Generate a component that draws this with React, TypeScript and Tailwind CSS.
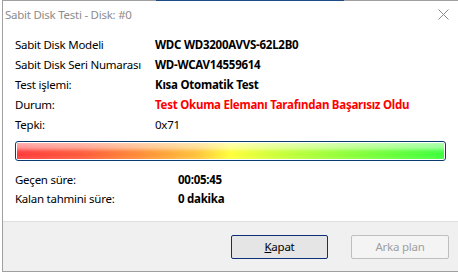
import React from "react";

const font = { fontFamily: '"Noto Sans", "Open Sans", sans-serif' };

function Row({ label, value, valueClass, labelW }: { label: string; value: string; valueClass: string; labelW: string }) {
  return (
    <div className="flex h-[20px] items-center">
      <div className={`${labelW} shrink-0 text-black`}>{label}</div>
      <div className={valueClass}>{value}</div>
    </div>
  );
}

export default function App() {
  return (
    <div className="relative h-[273px] w-[458px] overflow-hidden bg-white text-[11.5px] leading-none tracking-[-0.25px]" style={font}>
      <div className="ml-[2px] flex h-[272px] flex-col border-b border-l border-[#a0a0a0] bg-white">
        {/* top border */}
        <div className="flex h-[1px] shrink-0">
          <div className="w-[153px] bg-[#a0a0a0]" />
          <div className="w-[188px] bg-[#1c4a86]" />
          <div className="flex-1 bg-[#a0a0a0]" />
        </div>
        {/* title bar */}
        <div className="flex h-[28px] shrink-0 items-center justify-between pl-[2px] pr-[9px]">
          <span className="text-[#8c8c8c]">Sabit Disk Testi - Disk: #0</span>
          <svg width="11" height="11" viewBox="0 0 11 11" className="mb-[1px]">
            <path d="M0.5 0.5 L10.5 10.5 M10.5 0.5 L0.5 10.5" stroke="#8a8a8a" strokeWidth="1" />
          </svg>
        </div>
        <div className="flex flex-1 flex-col pl-[12px] pt-[6px]">
          <Row label="Sabit Disk Modeli" value="WDC WD3200AVVS-62L2B0" valueClass="font-bold text-black" labelW="w-[140px]" />
          <Row label="Sabit Disk Seri Numarası" value="WD-WCAV14559614" valueClass="font-bold text-black" labelW="w-[140px]" />
          <Row label="Test işlemi:" value="Kısa Otomatik Test" valueClass="font-bold text-black" labelW="w-[140px]" />
          <Row label="Durum:" value="Test Okuma Elemanı Tarafından Başarısız Oldu" valueClass="font-bold text-[#ff0000]" labelW="w-[140px]" />
          <Row label="Tepki:" value="0x71" valueClass="text-black" labelW="w-[140px]" />
          <div className="mt-[6px] h-[20px] w-[431px] rounded-[3px] border border-[#0a3a6e] p-[1px]">
            <div
              className="relative h-full w-full"
              style={{
                background:
                  "linear-gradient(to right, #ff3b3b 0%, #ff5a3a 15%, #ff8a36 28%, #ffc23a 42%, #ffff3a 50%, #c8ff3a 62%, #8cff3a 78%, #3cff3c 100%)",
              }}
            >
              <div
                className="absolute inset-0"
                style={{
                  background:
                    "linear-gradient(to bottom, rgba(255,255,255,0.6) 0%, rgba(255,255,255,0.45) 30%, rgba(255,255,255,0.05) 55%, rgba(255,255,255,0) 75%, rgba(255,255,255,0.1) 100%)",
                }}
              />
            </div>
          </div>
          <div className="mt-[9px]">
            <Row label="Geçen süre:" value="00:05:45" valueClass="font-bold text-black" labelW="w-[163px]" />
            <div className="-mt-[1px]">
              <Row label="Kalan tahmini süre:" value="0 dakika" valueClass="font-bold text-black" labelW="w-[163px]" />
            </div>
          </div>
        </div>
        {/* footer */}
        <div className="flex h-[50px] shrink-0 items-center justify-end gap-[23px] border-t border-[#dfdfdf] bg-[#f0f0f0] pr-[9px]">
          <button className="flex h-[24px] w-[97px] items-center justify-center rounded-[2px] border border-[#0b2f7a] bg-[#e5e5e5] text-black">
            <span><span className="underline">K</span>apat</span>
          </button>
          <button className="flex h-[24px] w-[98px] items-center justify-center rounded-[2px] border border-[#bfbfbf] bg-[#f4f4f4] text-[#a0a0a0]">
            Arka plan
          </button>
        </div>
      </div>
    </div>
  );
}
